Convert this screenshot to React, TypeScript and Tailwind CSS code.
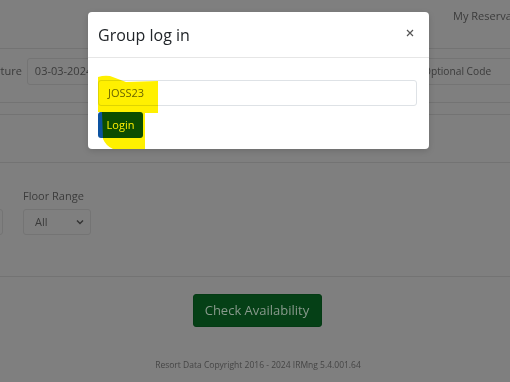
export default function App() {
  return (
    <div className="relative w-[510px] h-[382px] overflow-hidden bg-[#7f7f7f] text-[#3b3b3b] font-['Open_Sans',sans-serif]">
      {/* background page */}
      <div className="flex flex-col h-full">
        <div className="h-[49px] shrink-0 border-b border-[#737373] flex items-center">
          <span className="pl-[453px] text-[11px] whitespace-nowrap -mt-[16px]">My Reservations</span>
        </div>
        <div className="h-[54px] shrink-0 border-b border-[#737373] pt-[9px]">
          <div className="flex items-center h-[27px] whitespace-nowrap text-[11px]">
            <span className="-ml-[31px]">Departure</span>
            <div className="ml-[5px] h-[27px] w-[150px] border border-[#747474] rounded-[3px] flex items-center pl-[7px]">03-03-2024</div>
            <div className="flex-1" />
            <div className="h-[27px] w-[128px] -mr-[30px] border border-[#747474] rounded-[3px] flex items-center pl-[10px] text-[10.2px]">Optional Code</div>
          </div>
        </div>
        <div className="mt-[11px] h-[49px] shrink-0 border-y border-[#737373]" />
        <div className="h-[114px] shrink-0 border-b border-[#737373] flex gap-[20px] pt-[25px]">
          <div className="mt-[21px] h-[26px] w-[40px] -ml-[37px] border border-[#747474] rounded-[3px]" />
          <div className="flex flex-col">
            <span className="text-[11px] leading-[15px]">Floor Range</span>
            <div className="mt-[6px] h-[26px] w-[68px] border border-[#747474] rounded-[3px] flex items-center justify-between pl-[11px] pr-[6px] text-[11px]">
              <span>All</span>
              <svg width="8" height="6" viewBox="0 0 8 6"><path d="M1 1.5 L4 4.5 L7 1.5" fill="none" stroke="#333" strokeWidth="1.4" /></svg>
            </div>
          </div>
        </div>
        <div className="flex justify-center pt-[17px] pl-[4px]">
          <div className="h-[33px] w-[129px] bg-[#054016] rounded-[3px] flex items-center justify-center text-[13px] text-[#88998c] border border-[#043a14]">Check Availability</div>
        </div>
        <div className="mt-auto pb-[10px] text-center text-[8.5px] text-[#454545] pl-[6px]">Resort Data Copyright 2016 - 2024 IRMng 5.4.001.64</div>
      </div>

      {/* modal */}
      <div className="absolute left-[88px] top-[12px] w-[341px] h-[137px] bg-white rounded-[4px] shadow-[0_2px_6px_rgba(0,0,0,0.15)]">
        <div className="h-[46px] border-b border-[#e6e6e6] flex items-center justify-between pl-[10px] pr-[15px]">
          <span className="text-[16px] text-[#212529] mt-[1px]">Group log in</span>
          <svg width="8" height="8" viewBox="0 0 8 8" className="-mt-[3px]">
            <path d="M1 1 L7 7 M7 1 L1 7" stroke="#555" strokeWidth="1.2" />
          </svg>
        </div>
        <div className="pl-[10px] pt-[22px]">
          <div className="h-[26px] w-[319px] border border-[#dee2e6] rounded-[3px] flex items-center pl-[9px] text-[11px] text-[#6b6b6b]">JOSS23</div>
          <div className="mt-[6px] h-[26px] w-[45px] bg-[#0c52a0] rounded-[3px] flex items-center justify-center text-[11px] text-white">Login</div>
        </div>
      </div>

      {/* highlighter marks */}
      <svg className="absolute left-0 top-0 mix-blend-multiply pointer-events-none" width="510" height="382" viewBox="0 0 510 382">
        <path
          d="M98 77 Q104 75 110 76 L126 82 L158 81 L158 113 L145 113 L145 149 L113 149 Q106 146 103 139 L102 112 L98 112 Z"
          fill="#fff000"
        />
      </svg>
    </div>
  );
}
